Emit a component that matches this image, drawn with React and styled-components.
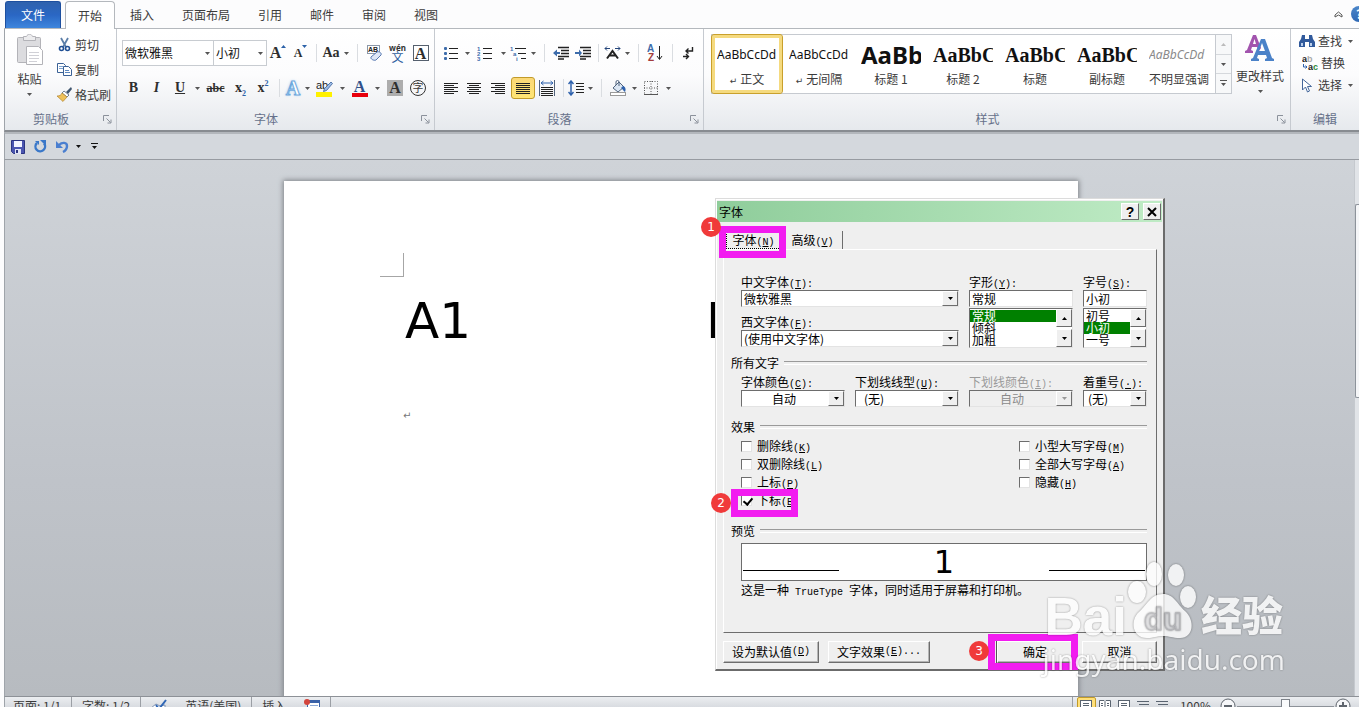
import { useState } from "react";
import styled, { createGlobalStyle } from "styled-components";

const GlobalStyle = createGlobalStyle`
  * {
    box-sizing: border-box;
    margin: 0;
    padding: 0;
  }
  body {
    background-color: #fcfcfd;
    font-family: "Noto Sans CJK SC", "Noto Sans", sans-serif;
    font-size: 12px;
    line-height: 16px;
    color: #3b3b3b;
    overflow: hidden;
  }
  button, input, select {
    font: inherit;
    color: inherit;
    border: none;
    border-radius: 0;
    background: none;
    outline: none;
  }
  svg {
    display: block;
    flex: none;
  }
`;

const Window = styled.div`
  position: relative;
  height: 100vh;
  padding-left: 4px;
  display: flex;
  flex-direction: column;
  overflow: hidden;
`;

/* 选项卡 */
const TabBar = styled.nav`
  display: flex;
  align-items: flex-end;
  height: 29px;
  padding-top: 1px;
  border-bottom: 1px solid #b4b8bd;
`;

const FileTab = styled.button`
  width: 56px;
  height: 27px;
  margin: 0 4px 0 1px;
  border: 1px solid #1d4f9f;
  border-bottom: none;
  border-radius: 3px 3px 0 0;
  background: linear-gradient(#2f62ad, #2a67c4 50%, #3f86dd);
  color: #fff;
`;

const Tab = styled.button`
  height: 28px;
  padding: 0 ${(props) => (props.$active ? 12 : 13)}px;
  margin-right: ${(props) => (props.$active ? 1 : 0)}px;
  margin-bottom: ${(props) => (props.$active ? -1 : 0)}px;
  border: 1px solid ${(props) => (props.$active ? "#b4b8bd" : "transparent")};
  border-bottom: none;
  border-radius: 4px 4px 0 0;
  background-color: ${(props) => (props.$active ? "#fff" : "transparent")};
`;

const TabTools = styled.div`
  display: flex;
  align-items: center;
  gap: 8px;
  height: 28px;
  margin-left: auto;
  margin-right: -8px;
`;

const Help = styled.button`
  width: 16px;
  height: 16px;
  border-radius: 50%;
  background: linear-gradient(#4c86c9, #2e68b4);
  color: #fff;
  font-weight: 700;
  line-height: 14px;
`;

/* 功能区 */
const Ribbon = styled.div`
  display: flex;
  height: 103px;
  border-left: 1px solid #9fa4aa;
  border-bottom: 2px solid #888c91;
  background: linear-gradient(#fff, #fcfcfd 45%, #e6e9ed);
`;

const Group = styled.section`
  flex: ${(props) => (props.$w ? `0 0 ${props.$w}px` : "1 1 0")};
  display: flex;
  flex-direction: column;
  border-right: 1px solid #c6cad0;
  &:last-child {
    border-right: none;
  }
`;

const GroupBody = styled.div`
  flex: 1;
  display: flex;
  padding-left: ${(props) => props.$pad || 0}px;
`;

const Caption = styled.div`
  display: flex;
  align-items: center;
  height: 22px;
  color: #66718a;
  span {
    flex: 1;
    text-align: center;
  }
  span:not(:last-child) {
    padding-right: 6px;
  }
  svg {
    margin-right: 4px;
  }
`;

const Rows = styled.div`
  display: flex;
  flex-direction: column;
  gap: 9px;
  padding-top: 11px;
`;

const Row = styled.div`
  display: flex;
  align-items: center;
  height: 26px;
`;

const IconBtn = styled.button`
  display: flex;
  align-items: center;
  justify-content: center;
  flex: none;
  width: ${(props) => props.$w || 23}px;
  height: 22px;
  border: 1px solid ${(props) => (props.$on ? "#c29b29" : "transparent")};
  border-radius: 3px;
  background: ${(props) =>
    props.$on ? "linear-gradient(#fbd877, #ffe574)" : "none"};
`;

/* 字号增减：箭头在字母右上角 */
const SizeBtn = styled(IconBtn)`
  svg {
    align-self: flex-start;
    margin-top: 2px;
  }
`;

const Sep = styled.span`
  width: ${(props) => props.$w || 12}px;
  height: 18px;
  display: flex;
  justify-content: center;
  &::after {
    content: "";
    width: 1px;
    background-color: #dadde1;
  }
`;

const Letter = styled.span`
  font-family: "Liberation Serif", serif;
  font-size: ${(props) => props.$size || 16}px;
  font-weight: 700;
  font-style: ${(props) => (props.$italic ? "italic" : "normal")};
  text-decoration: ${(props) => props.$line || "none"};
  line-height: 18px;
  color: ${(props) => props.$color || "#2e2e2e"};
  sub,
  sup {
    font-size: 8px;
    line-height: 8px;
    color: #2c62a8;
  }
`;

const BoxLetter = styled(Letter)`
  width: 16px;
  height: 16px;
  line-height: 15px;
  text-align: center;
  border: ${(props) => (props.$shade ? "none" : "1px solid #55606e")};
  background-color: ${(props) => (props.$shade ? "#adadad" : "#fff")};
`;

const Ring = styled.span`
  width: 16px;
  height: 16px;
  border: 1px solid #333;
  border-radius: 50%;
  font-size: 11px;
  line-height: 13px;
`;

const Underbar = styled.span`
  display: flex;
  flex-direction: column;
  align-items: center;
  width: 16px;
  border-bottom: 4px solid ${(props) => props.$bar};
  span {
    line-height: 13px;
  }
`;

const Glow = styled(Letter)`
  color: #fff;
  -webkit-text-stroke: 1px #6fa9dd;
  text-shadow: 0 0 3px #8fc2ee;
`;

const Pinyin = styled.span`
  display: flex;
  flex-direction: column;
  align-items: center;
  font-size: 12px;
  line-height: 11px;
  color: #2f5f9f;
  small {
    font-family: "Noto Sans", sans-serif;
    font-size: 8px;
    line-height: 7px;
    font-weight: 700;
    color: #333;
  }
`;

const Combo = styled.label`
  display: flex;
  align-items: center;
  width: ${(props) => props.$w}px;
  height: 26px;
  margin-right: -1px;
  padding: 0 3px 0 2px;
  border: 1px solid #c8ccd1;
  background-color: #fff;
  color: #111;
  input {
    flex: 1;
    min-width: 0;
  }
`;

const BigBtn = styled.button`
  display: flex;
  flex-direction: column;
  align-items: center;
  width: ${(props) => props.$w}px;
  padding-top: 5px;
  gap: 6px;
`;

const SmallList = styled.div`
  display: flex;
  flex-direction: column;
  padding-top: ${(props) => props.$top}px;
`;

const SmallBtn = styled.button`
  display: flex;
  align-items: center;
  height: ${(props) => props.$h}px;
  gap: 3px;
  svg:last-child {
    margin-left: 3px;
  }
`;

const Gallery = styled.div`
  display: flex;
  width: 521px;
  height: 60px;
  margin: 5px 0 0 7px;
  border: 1px solid #c6cad0;
  background-color: #fff;
`;

const StyleItem = styled.button`
  width: 72px;
  margin: -1px 0 -1px ${(props) => (props.$on ? -1 : 0)}px;
  display: flex;
  flex-direction: column;
  align-items: center;
  padding-top: 6px;
  border: ${(props) => (props.$on ? "1px solid #c9a02c" : "1px solid transparent")};
  border-radius: 3px;
  box-shadow: ${(props) => (props.$on ? "inset 0 0 0 3px #f5da7f" : "none")};
`;

const Sample = styled.span`
  width: 60px;
  height: 28px;
  overflow: hidden;
  white-space: nowrap;
  text-align: left;
  line-height: 28px;
  font-family: ${(props) =>
    props.$serif ? '"Liberation Serif", serif' : '"Noto Sans", sans-serif'};
  font-size: ${(props) => props.$size || 12}px;
  font-weight: ${(props) => (props.$size ? 700 : 400)};
  font-style: ${(props) => (props.$faint ? "italic" : "normal")};
  color: ${(props) => (props.$faint ? "#8a8a8a" : "#111")};
`;

const StyleName = styled.span`
  margin-top: 2px;
  white-space: nowrap;
  small {
    font-family: "DejaVu Sans", sans-serif;
    font-size: 9px;
    line-height: 9px;
  }
`;

const Scroller = styled.div`
  display: flex;
  flex-direction: column;
  flex: 1;
  border-left: 1px solid #c6cad0;
  background-color: #f7f8f9;
  button {
    flex: 1;
    display: flex;
    align-items: center;
    justify-content: center;
  }
  button + button {
    border-top: 1px solid #d5d8dc;
  }
`;

/* 快速访问工具栏 */
const QuickBar = styled.div`
  display: flex;
  align-items: center;
  height: 28px;
  padding-left: 2px;
  border-left: 1px solid #9fa4aa;
  border-top: 2px solid #b3b7bc;
  border-bottom: 1px solid #979ba1;
  background-color: #d4d8dd;
`;

/* 文档区 */
const Workspace = styled.main`
  flex: 1;
  min-height: 0;
  display: flex;
  border-left: 1px solid #9fa4aa;
  background: linear-gradient(#cfd3d8, #bfc3c9 60%, #b7bbc0);
`;

const Canvas = styled.div`
  flex: 1;
  display: flex;
  justify-content: center;
  padding-top: 21px;
  padding-left: 3px;
  overflow: hidden;
`;

const Paper = styled.article`
  flex: 0 0 794px;
  height: 1123px;
  padding: 72px 96px;
  background-color: #fff;
  box-shadow: 0 0 5px 1px #7f8388;
`;

const CropMark = styled.div`
  width: 24px;
  height: 24px;
  border-right: 1px solid #a6a6a6;
  border-bottom: 1px solid #a6a6a6;
`;

const Line = styled.p`
  display: flex;
  gap: 235px;
  margin: 14px 0 57px 25px;
  font-family: "DejaVu Sans", sans-serif;
  font-size: 50px;
  line-height: 60px;
  color: #000;
`;

const ParaMark = styled.p`
  margin-left: 23px;
  font-family: "DejaVu Sans", sans-serif;
  font-size: 10px;
  color: #777;
`;

const VScroll = styled.div`
  width: 5px;
  padding-top: 44px;
  background-color: #e1e4e8;
  border-left: 1px solid #c5c9ce;
`;

const VThumb = styled.div`
  height: 194px;
  border: 1px solid #8d939b;
  border-right: none;
  border-radius: 2px 0 0 2px;
  background-color: #f5f6f8;
`;

/* 状态栏 */
const StatusBar = styled.footer`
  flex: 0 0 11px;
  overflow: hidden;
  border-left: 1px solid #9fa4aa;
  border-top: 1px solid #8d9197;
  background-color: #d9dde2;
`;

const StatusInner = styled.div`
  display: flex;
  align-items: center;
  height: 18px;
  padding-left: 8px;
  background: linear-gradient(#eceef1, #c9cdd3);
`;

const StatusItem = styled.span`
  display: flex;
  align-items: center;
  height: 18px;
  padding: 0 ${(props) => (props.$tight ? 8 : 10)}px 0
    ${(props) => (props.$first ? 0 : 10)}px;
  border-right: ${(props) => (props.$open ? "none" : "1px solid #9b9fa5")};
`;

const Views = styled.div`
  display: flex;
  align-items: center;
  margin-left: auto;
  padding-left: 4px;
  border-left: 1px solid #9b9fa5;
  > button {
    width: 19px;
    height: 18px;
    display: flex;
    align-items: center;
    justify-content: center;
    border-radius: 2px;
  }
  > button:first-child {
    background-color: #ffe07a;
    border: 1px solid #c29b29;
  }
`;

const Zoom = styled.div`
  display: flex;
  align-items: center;
  margin-left: 8px;
  padding-right: 8px;
  gap: 1px;
  label {
    margin-right: 8px;
  }
`;

const ZoomRange = styled.input`
  width: 97px;
  height: 16px;
  appearance: none;
  background: linear-gradient(#8d9299, #8d9299) center / 100% 1px no-repeat;
  &::-webkit-slider-thumb {
    appearance: none;
    width: 9px;
    height: 14px;
    border: 1px solid #7d8289;
    background-color: #fafbfc;
  }
`;

/* 字体对话框 */
const Dialog = styled.form`
  position: absolute;
  left: 715px;
  top: 198px;
  width: 450px;
  padding: 2px 1px 6px;
  border: 1px solid #dcdcdc;
  border-right: 2px solid #6b6b6b;
  border-bottom: 2px solid #6b6b6b;
  box-shadow: inset 1px 1px 0 #fff;
  background-color: #efefef;
  color: #000;
`;

const TitleBar = styled.header`
  display: flex;
  align-items: center;
  gap: 4px;
  height: 21px;
  padding: 0 1px 0 2px;
  background: linear-gradient(90deg, #8fcd9b, #bfebc5);
  h2 {
    flex: 1;
    font-size: 12px;
    font-weight: 400;
  }
`;

const Raised = styled.button`
  display: flex;
  align-items: center;
  justify-content: center;
  border: 1px solid;
  border-color: #fff #6d6d6d #6d6d6d #fff;
  background-color: #efefef;
`;

const CaptionBtn = styled(Raised)`
  width: 18px;
  height: 17px;
  font-family: "Liberation Sans", sans-serif;
  font-size: 14px;
  font-weight: 700;
`;

const DialogBody = styled.div`
  padding: 9px 5px 0 6px;
`;

const DialogTabs = styled.div`
  display: flex;
  height: 18px;
`;

const DialogTab = styled.button`
  width: 60px;
  height: 18px;
  white-space: nowrap;
  line-height: 18px;
  border-right: ${(props) => (props.$on ? "none" : "1px solid #6d6d6d")};
`;

const TabFocus = styled.span`
  display: block;
  width: 53px;
  height: 16px;
  margin-left: 4px;
  line-height: 16px;
  outline: 1px dotted #000;
`;

const Key = styled.span`
  font-family: "Liberation Mono", monospace;
  font-size: 10px;
  line-height: 1;
`;

const Panel = styled.div`
  padding: 23px 9px 34px 7px;
  border: 1px solid;
  border-color: #fff #6d6d6d #6d6d6d #fff;
`;

const SectionTitle = styled.h3`
  display: flex;
  align-items: center;
  gap: 5px;
  height: 16px;
  margin-top: ${(props) => props.$top}px;
  font-size: 12px;
  font-weight: 400;
  &::after {
    content: "";
    flex: 1;
    height: 2px;
    border-top: 1px solid #9a9a9a;
    border-bottom: 1px solid #fff;
  }
`;

const Fields = styled.div`
  display: grid;
  grid-template-columns: 104px 104px 104px 1fr;
  column-gap: 10px;
  padding: ${(props) => props.$top || 0}px 0 0 10px;
`;

const FieldStack = styled.div`
  grid-column: span ${(props) => props.$span || 1};
  display: flex;
  flex-direction: column;
  gap: 6px;
  min-width: 0;
`;

const FieldLabel = styled.label`
  display: block;
  height: 17px;
  white-space: nowrap;
  line-height: 17px;
  color: ${(props) => (props.$off ? "#9a9a9a" : "#000")};
`;

const Sunken = styled.div`
  display: flex;
  height: 17px;
  border: 1px solid;
  border-color: #6d6d6d #e3e3e3 #e3e3e3 #6d6d6d;
  background-color: ${(props) => (props.$off ? "#efefef" : "#fff")};
  color: ${(props) => (props.$off ? "#8a8a8a" : "#000")};
  select,
  input {
    flex: 1;
    min-width: 0;
    width: 100%;
    height: 15px;
    line-height: 15px;
    appearance: none;
    opacity: 1;
    padding-left: ${(props) => props.$indent || 2}px;
  }
`;

const ArrowBox = styled(Raised).attrs({ as: "span" })`
  width: 16px;
  height: 15px;
`;

const ListFrame = styled.div`
  display: flex;
  height: 40px;
  margin-top: 1px;
  border: 1px solid;
  border-color: #6d6d6d #e3e3e3 #e3e3e3 #6d6d6d;
  background-color: #fff;
`;

const ListBox = styled.ul`
  flex: 1;
  list-style: none;
  padding-top: 1px;
  overflow: hidden;
`;

const ListItem = styled.li`
  height: 12px;
  line-height: 12px;
  padding-left: 2px;
  background-color: ${(props) => (props.$on ? "#008000" : "transparent")};
  color: ${(props) => (props.$on ? "#fff" : "#000")};
`;

const ListScroll = styled.div`
  display: flex;
  flex-direction: column;
  justify-content: space-between;
  button {
    width: 16px;
    height: 18px;
  }
`;

const Effects = styled.div`
  display: grid;
  grid-template-columns: 278px 1fr;
  padding: 2px 0 0 10px;
`;

const Check = styled.label`
  display: flex;
  align-items: center;
  gap: 5px;
  height: 18px;
  white-space: nowrap;
`;

const Tick = styled.input`
  position: relative;
  appearance: none;
  width: 11px;
  height: 11px;
  border: 1px solid;
  border-color: #6d6d6d #e3e3e3 #e3e3e3 #6d6d6d;
  background-color: #fff;
  &:checked::after {
    content: "";
    position: absolute;
    left: 3px;
    top: 0;
    width: 4px;
    height: 7px;
    border: solid #000;
    border-width: 0 2px 2px 0;
    transform: rotate(40deg);
  }
`;

const Preview = styled.div`
  display: flex;
  align-items: center;
  justify-content: space-between;
  height: 38px;
  margin: 4px 0 1px 10px;
  padding: 0 1px;
  border: 1px solid #6d6d6d;
  background-color: #fff;
  font-family: "DejaVu Sans", sans-serif;
  font-size: 32px;
  line-height: 36px;
  &::before,
  &::after {
    content: "";
    align-self: flex-end;
    width: 96px;
    height: 1px;
    margin-bottom: 9px;
    background-color: #000;
  }
`;

const Note = styled.p`
  height: 16px;
  padding-left: 10px;
`;

const Actions = styled.div`
  display: flex;
  gap: 9px;
  margin-top: 8px;
`;

const PushBtn = styled(Raised)`
  width: ${(props) => props.$w}px;
  height: 22px;
  margin-left: ${(props) => (props.$end ? "auto" : 0)};
  box-shadow: inset -1px -1px 0 #b5b5b5;
  outline: ${(props) => (props.$end ? "1px solid #555" : "none")};
`;

/* 标注 */
const Mark = styled.div`
  position: absolute;
  left: ${(props) => props.$x}px;
  top: ${(props) => props.$y}px;
  width: ${(props) => props.$w}px;
  height: ${(props) => props.$h}px;
  border: 7px solid #f21cf0;
  pointer-events: none;
`;

const Step = styled.span`
  position: absolute;
  left: ${(props) => props.$x}px;
  top: ${(props) => props.$y}px;
  width: 20px;
  height: 20px;
  border-radius: 50%;
  background-color: #f03a3a;
  color: #fff;
  font-family: "DejaVu Sans", sans-serif;
  font-size: 12px;
  line-height: 20px;
  text-align: center;
`;

const Watermark = styled.div`
  position: absolute;
  right: 74px;
  bottom: 32px;
  opacity: 0.8;
  color: #fff;
  pointer-events: none;
  text-shadow: 0 0 2px rgba(0, 0, 0, 0.5);
`;

const Brand = styled.div`
  display: flex;
  align-items: flex-end;
  padding-left: 2px;
  font-family: "Liberation Sans", "Noto Sans CJK SC", sans-serif;
  font-size: 53px;
  font-weight: 700;
  line-height: 52px;
  svg {
    margin-bottom: 5px;
    filter: drop-shadow(0 0 1px rgba(0, 0, 0, 0.5));
  }
  strong {
    margin-left: 4px;
    font-size: 41px;
    line-height: 52px;
  }
`;

const Site = styled.div`
  font-family: "Noto Sans", sans-serif;
  font-size: 28px;
  line-height: 32px;
`;

const Caret = ({ up, color = "#555", size = 5 }) => (
  <svg width={size} height="3" viewBox="0 0 5 3">
    <path d={up ? "M0 3h5L2.5 0z" : "M0 0h5L2.5 3z"} fill={color} />
  </svg>
);

const Drop = () => (
  <IconBtn $w={10} aria-label="更多">
    <Caret />
  </IconBtn>
);

const Launcher = () => (
  <svg width="9" height="9" viewBox="0 0 9 9" fill="none" stroke="#8b919b">
    <path d="M.5 6V.5H6M3.5 3.5l4 4M8 4.5V8H4.5" />
  </svg>
);

const Bars = ({ rows, width = 15, color = "#222" }) => (
  <svg width={width} height="13" viewBox={`0 0 ${width} 13`}>
    {rows.map(([x, w], i) => (
      <rect key={i} x={x} y={i * 2 + 1} width={w} height="1" fill={color} />
    ))}
  </svg>
);

const alignLeft = [[0, 14], [0, 10], [0, 14], [0, 10], [0, 14], [0, 10]];
const alignCenter = [[0, 14], [2, 10], [0, 14], [2, 10], [0, 14], [2, 10]];
const alignRight = [[0, 14], [4, 10], [0, 14], [4, 10], [0, 14], [4, 10]];
const justify = [[0, 14], [0, 14], [0, 14], [0, 14], [0, 14], [0, 14]];

const ListIcon = ({ kind }) => (
  <svg width="16" height="16" viewBox="0 0 16 16">
    {[2, 7, 12].map((y, i) => (
      <g key={y}>
        {kind === "bullet" && (
          <rect x="1" y={y} width="3" height="3" rx="1" fill="#3d6cab" />
        )}
        {kind !== "bullet" && (
          <text
            x={kind === "multi" ? i * 3 : 0}
            y={y + 4}
            fontSize="6"
            fontFamily="Liberation Sans, sans-serif"
            fontWeight="700"
            fill="#3d6cab"
          >
            {kind === "multi" ? ["1", "a", "i"][i] : i + 1}
          </text>
        )}
        <rect
          x={kind === "multi" ? 5 + i * 3 : 6}
          y={y + 1}
          width={kind === "multi" ? 11 - i * 3 : 9}
          height="1"
          fill="#222"
        />
      </g>
    ))}
  </svg>
);

const Indent = ({ flip }) => (
  <svg width="16" height="14" viewBox="0 0 16 14">
    <path
      d="M5 1.5h11M8 4.5h8M8 7.5h8M5 10.5h11M5 13h6"
      stroke="#222"
      strokeWidth="1.4"
    />
    <path
      d={flip ? "M0 6h4V3.500l3 3.500-3 3.500V8H0z" : "M7 6H4V3.500L0 7l4 3.500V8h3z"}
      fill="#3d6cab"
    />
  </svg>
);

const AsianLayout = () => (
  <svg width="17" height="14" viewBox="0 0 17 14" fill="none" stroke="#222">
    <path d="M3 12.500L8.500 5l5.500 7.500M5 9.500h7" strokeWidth="2" />
    <path d="M1 2.500h5M11 2.500h5M3 .5l-2 2 2 2M14 .5l2 2-2 2" stroke="#24457a" />
  </svg>
);

const SortIcon = () => (
  <svg width="16" height="18" viewBox="0 0 16 18">
    <g fontFamily="Liberation Sans, sans-serif" fontWeight="700" fontSize="10">
      <text x="0" y="8" fill="#3d6cab">A</text>
      <text x="1" y="17" fill="#a33c3c">Z</text>
    </g>
    <path d="M12.500 2v13M10 12l2.500 3.500L15 12" stroke="#222" fill="none" />
  </svg>
);

const MarksIcon = () => (
  <svg width="12" height="14" viewBox="0 0 12 14" stroke="#222" fill="none">
    <path d="M10.500 1v4H4M6.500 2.500L4 5l2.500 2.500M1 10.500h5M4 8l2.500 2.500L4 13" strokeWidth="1.400" />
  </svg>
);

const Distribute = () => (
  <svg width="16" height="16" viewBox="0 0 16 16" fill="none">
    <path d="M.5 0v16M15.500 0v16" stroke="#54657c" />
    <path d="M2 3h12M4.500 1L2 3l2.500 2M11.500 1L14 3l-2.500 2" stroke="#2f62ad" />
    <path d="M2 7.500h12M2 9.500h12M2 11.500h12M2 13.500h12M2 15.500h12" stroke="#222" />
  </svg>
);

const Spacing = () => (
  <svg width="16" height="16" viewBox="0 0 16 16" fill="none">
    <path d="M3 1v14M.5 4L3 1l2.500 3M.5 12L3 15l2.500-3" stroke="#2f62ad" strokeWidth="1.500" />
    <path d="M8 3.500h8M8 6.500h8M8 9.500h8M8 12.500h8" stroke="#222" />
  </svg>
);

const Bucket = () => (
  <svg width="17" height="16" viewBox="0 0 17 16">
    <path d="M3 8l6-6 5 5-6 5z" fill="#dbe6f3" stroke="#51647e" />
    <path d="M6 5V2a1.500 1.500 0 013 0v4" fill="none" stroke="#51647e" />
    <path d="M13 6c3 1 3 4 2 6-2-1-2-3-4-4z" fill="#2f62ad" />
    <rect x=".5" y="12.500" width="15" height="3" fill="#fff" stroke="#9a9a9a" />
  </svg>
);

const BorderIcon = () => (
  <svg width="14" height="14" viewBox="0 0 14 14" fill="none" stroke="#555">
    <path d="M.5.5h13v13H.5zM7 0v14M0 7h14" strokeDasharray="1 1.500" />
    <path d="M0 13.500h14" />
  </svg>
);

const PasteIcon = () => (
  <svg width="28" height="31" viewBox="0 0 28 31" stroke="#b3b3b8">
    <rect x="1.500" y="3.500" width="23" height="25" rx="1" fill="#dcdcdf" />
    <path d="M7.500 6.500v-4h3c1-3 5-3 6 0h3v4z" fill="#ececee" />
    <path d="M10.500 12.500h12l4 4v14h-16z" fill="#fff" />
    <path d="M13 18.500h10M13 21.500h10M13 24.500h10M13 27.500h8" stroke="#d0d0d6" />
  </svg>
);

const CutIcon = () => (
  <svg width="15" height="15" viewBox="0 0 15 15" fill="none">
    <path d="M4 1l5 9M11 1L6 10" stroke="#5b7ea8" strokeWidth="1.800" />
    <circle cx="4.500" cy="11.500" r="2" stroke="#1f4f94" strokeWidth="1.600" />
    <circle cx="10.500" cy="11.500" r="2" stroke="#1f4f94" strokeWidth="1.600" />
  </svg>
);

const CopyIcon = () => (
  <svg width="15" height="15" viewBox="0 0 15 15" fill="#fff" stroke="#3a6196">
    <path d="M.5 1.500h6l2 2v7h-8z" />
    <path d="M2 4.500h4M2 6.500h4" stroke="#7fa3d0" />
    <path d="M6.500 4.500h5l3 3v6h-8z" />
    <path d="M8 8.500h4M8 10.500h5" stroke="#5b86bf" />
  </svg>
);

const BrushIcon = () => (
  <svg width="15" height="15" viewBox="0 0 15 15">
    <path d="M14 0l1 2-4 5-2-2z" fill="#40566f" />
    <path d="M7 4l5 4-2 2-5-4z" fill="#fff" stroke="#4f5f74" strokeWidth=".8" />
    <path d="M5 6l5 4-4 4.500L0 9c3 0 4-1 5-3z" fill="#efc15a" stroke="#a97a22" strokeWidth=".6" />
  </svg>
);

const ClearIcon = () => (
  <svg width="17" height="17" viewBox="0 0 17 17">
    <rect x="1.500" y=".5" width="12" height="8" fill="#fff" stroke="#8b97a8" />
    <text x="2" y="7" fontSize="7" fontWeight="700" fontFamily="Liberation Sans, sans-serif" fill="#222">
      AB
    </text>
    <path d="M5 12l6-5c2-1 5 1 4 3l-5 5c-2 1-6-1-5-3z" fill="#dfe7f6" stroke="#5577b0" />
  </svg>
);

const Highlighter = () => (
  <svg width="17" height="17" viewBox="0 0 17 17">
    <text x="0" y="9" fontSize="11" fontFamily="Liberation Sans, sans-serif" fill="#222">
      ab
    </text>
    <rect x="0" y="12" width="16" height="5" fill="#fff100" />
    <path d="M15 2l1.500 1.500-6 7-3 1 1-3z" fill="#9cbbe6" stroke="#385f9b" strokeWidth=".8" />
  </svg>
);

const StylesIcon = () => (
  <svg width="30" height="28" viewBox="0 0 30 28">
    <path d="M0 19v-2l2-1L8 1h3l5 13-2 3-2-4H7l-1 3 2 1v2zM8 10h3L9.500 5z" fill="#a254ae" />
    <path d="M6 27v-2l2-1 8-19h4l7 19 2 1v2h-9v-2l2-1-1-3h-8l-1 3 2 1v2zM14 17h6l-3-8z" fill="#4b82c8" />
  </svg>
);

const FindIcon = () => (
  <svg width="16" height="14" viewBox="0 0 16 14" fill="#315a9c">
    <path d="M3 1h3v4h4V1h3l1 4 2 3v5h-6V8H6v5H0V8l2-3z" />
    <path d="M2 9h2v3H2zM11 9h2v3h-2z" fill="#b9cdea" />
  </svg>
);

const ReplaceIcon = () => (
  <svg width="16" height="15" viewBox="0 0 16 15">
    <g fontFamily="Liberation Sans, sans-serif" fontWeight="700" fontSize="9">
      <text x="0" y="6" fill="#222">a</text>
      <text x="5" y="6" fill="#aaa">b</text>
      <text x="6" y="14" fill="#222">a</text>
      <text x="11" y="14" fill="#2d8a3e">c</text>
    </g>
    <path d="M1.500 8v3H5M3.500 9.500L5 11l-1.500 1.500" fill="none" stroke="#2f62ad" />
  </svg>
);

const PointerIcon = () => (
  <svg width="16" height="15" viewBox="0 0 16 15">
    <path d="M3.500 1v11l3-3 2 5 2-1-2-4.500h4z" fill="#fff" stroke="#44679b" />
  </svg>
);

const SaveIcon = () => (
  <svg width="14" height="14" viewBox="0 0 14 14">
    <path d="M.5.5h13v13h-11l-2-2z" fill="#4a55b0" stroke="#2b3582" />
    <rect x="3" y="1" width="8" height="6" fill="#f2f4ff" />
    <rect x="4" y="9" width="6" height="5" fill="#dfe3f5" />
    <rect x="5" y="10" width="2" height="3" fill="#2b3582" />
  </svg>
);

const RedoIcon = () => (
  <svg width="13" height="13" viewBox="0 0 13 13" fill="none">
    <path d="M3 3a4.800 4.800 0 107 .5" stroke="#3a78c9" strokeWidth="2.400" />
    <path d="M6 0h6v6z" fill="#3a78c9" />
    <path d="M1 1h4v4z" fill="#3a78c9" />
  </svg>
);

const UndoIcon = () => (
  <svg width="13" height="13" viewBox="0 0 13 13" fill="none">
    <path d="M3 5c3-3 8-3 8 1 0 3-2 5-4 6" stroke="#4a7fd0" strokeWidth="2.400" />
    <path d="M0 1v7h7z" fill="#4a7fd0" />
  </svg>
);

const ProofIcon = () => (
  <svg width="16" height="15" viewBox="0 0 16 15">
    <path d="M0 9l5-4 4 2 5-1v6l-6 2-5-1z" fill="#fff" stroke="#7f93b2" />
    <path d="M5 6l3 4 7-9" fill="none" stroke="#2f66b5" strokeWidth="2" />
  </svg>
);

const MacroIcon = () => (
  <svg width="16" height="14" viewBox="0 0 16 14">
    <rect x="3.500" y="1.500" width="12" height="12" fill="#fff" stroke="#3a62a8" />
    <path d="M4 3h11" stroke="#3a62a8" strokeWidth="2" />
    <path d="M6 6.500h8M6 9.500h8" stroke="#8ea9d6" />
    <circle cx="3" cy="3" r="3" fill="#d3453c" />
  </svg>
);

const PageIcon = () => (
  <svg width="12" height="12" viewBox="0 0 12 12" fill="#fff" stroke="#5a6470">
    <rect x=".5" y=".5" width="11" height="11" />
    <path d="M3 3.500h6M3 5.500h6M3 7.500h6" />
  </svg>
);

const BookIcon = () => (
  <svg width="12" height="12" viewBox="0 0 12 12" fill="#fff" stroke="#5a6470">
    <path d="M.5.5H5l1 1 1-1h4.500v10H7l-1 1-1-1H.5zM6 2v9M2 3.500h2M8 3.500h2M2 5.500h2M8 5.500h2" />
  </svg>
);

const LinesIcon = () => (
  <svg width="12" height="12" viewBox="0 0 12 12" stroke="#5a6470">
    <path d="M0 1.500h12M2 4.500h10M0 7.500h12M2 10.500h10" />
  </svg>
);

const RoundIcon = ({ plus }) => (
  <svg width="16" height="16" viewBox="0 0 16 16" stroke="#5f656d">
    <circle cx="8" cy="8" r="7" fill="#f6f7f9" />
    <path d={plus ? "M4 8h8M8 4v8" : "M4 8h8"} strokeWidth="2" />
  </svg>
);

const Paw = () => (
  <svg width="70" height="78" viewBox="0 0 70 78" fill="#fff">
    <ellipse cx="10" cy="32" rx="9" ry="11" />
    <ellipse cx="27" cy="14" rx="8" ry="12" />
    <ellipse cx="49" cy="15" rx="8" ry="11" />
    <ellipse cx="61" cy="37" rx="8" ry="11" />
    <path d="M36 34c11 0 14 10 22 17 10 9 9 27-5 27-8 0-10-2-17-2s-9 2-16 2C5 78 3 60 12 52c8-7 12-18 24-18z" />
    <text
      x="17"
      y="70"
      fontSize="31"
      fontWeight="700"
      fontFamily="Liberation Sans, sans-serif"
      fill="#e6e6e8"
      stroke="#b4b4b8"
    >
      du
    </text>
  </svg>
);

const tabs = ["插入", "页面布局", "引用", "邮件", "审阅", "视图"];

const gallery = [
  { name: "正文", mark: true, text: "AaBbCcDd", on: true },
  { name: "无间隔", mark: true, text: "AaBbCcDd" },
  { name: "标题 1", text: "AaBb", size: 24 },
  { name: "标题 2", text: "AaBbC", size: 20, serif: true },
  { name: "标题", text: "AaBbC", size: 20, serif: true },
  { name: "副标题", text: "AaBbC", size: 20, serif: true },
  { name: "不明显强调", text: "AaBbCcDd", faint: true },
];

const effects = [
  ["删除线", "K"],
  ["小型大写字母", "M"],
  ["双删除线", "L"],
  ["全部大写字母", "A"],
  ["上标", "P"],
  ["隐藏", "H"],
  ["下标", "B"],
];

const Hot = ({ k, end = "" }) => (
  <Key>
    (<u>{k}</u>){end}
  </Key>
);

const SelectField = ({ id, label, k, value, off, indent }) => (
  <div>
    <FieldLabel htmlFor={id} $off={off}>
      {label}
      <Hot k={k} end=":" />
    </FieldLabel>
    <Sunken $off={off} $indent={indent}>
      <select id={id} disabled={off}>
        <option>{value}</option>
      </select>
      <ArrowBox aria-hidden="true">
        <Caret color={off ? "#999" : "#000"} />
      </ArrowBox>
    </Sunken>
  </div>
);

const ListField = ({ id, label, k, items, picked }) => {
  const [value, setValue] = useState(picked);
  return (
    <div>
      <FieldLabel htmlFor={id}>
        {label}
        <Hot k={k} end=":" />
      </FieldLabel>
      <Sunken>
        <input
          id={id}
          value={value}
          onChange={(e) => setValue(e.target.value)}
        />
      </Sunken>
      <ListFrame>
        <ListBox role="listbox" aria-label={label}>
          {items.map((item) => (
            <ListItem
              key={item}
              role="option"
              aria-selected={item === value}
              $on={item === value}
              onClick={() => setValue(item)}
            >
              {item}
            </ListItem>
          ))}
        </ListBox>
        <ListScroll>
          <Raised type="button" aria-label="向上">
            <Caret up color="#000" size={7} />
          </Raised>
          <Raised type="button" aria-label="向下">
            <Caret color="#000" size={7} />
          </Raised>
        </ListScroll>
      </ListFrame>
    </div>
  );
};

const FontDialog = () => {
  const [checked, setChecked] = useState({ B: true });

  const toggle = (key) => {
    setChecked((prev) => ({ ...prev, [key]: !prev[key] }));
  };

  return (
    <Dialog onSubmit={(e) => e.preventDefault()}>
      <TitleBar>
        <h2>字体</h2>
        <CaptionBtn type="button">?</CaptionBtn>
        <CaptionBtn type="button" aria-label="关闭">
          <svg width="10" height="10" viewBox="0 0 10 10" stroke="#000" strokeWidth="2">
            <path d="M1 1l8 8M9 1L1 9" />
          </svg>
        </CaptionBtn>
      </TitleBar>

      <DialogBody>
        <DialogTabs>
          <DialogTab type="button" $on>
            <TabFocus>
              字体
              <Hot k="N" />
            </TabFocus>
          </DialogTab>
          <DialogTab type="button">
            高级
            <Hot k="V" />
          </DialogTab>
        </DialogTabs>

        <Panel>
          <Fields>
            <FieldStack $span={2}>
              <SelectField id="cn" label="中文字体" k="T" value="微软雅黑" />
              <SelectField id="en" label="西文字体" k="F" value="(使用中文字体)" />
            </FieldStack>
            <ListField
              id="face"
              label="字形"
              k="Y"
              items={["常规", "倾斜", "加粗"]}
              picked="常规"
            />
            <ListField
              id="size"
              label="字号"
              k="S"
              items={["初号", "小初", "一号"]}
              picked="小初"
            />
          </Fields>

          <SectionTitle $top={7}>所有文字</SectionTitle>
          <Fields $top={2}>
            <SelectField id="color" label="字体颜色" k="C" value="自动" indent={30} />
            <SelectField id="line" label="下划线线型" k="U" value="(无)" indent={8} />
            <SelectField
              id="lineColor"
              label="下划线颜色"
              k="I"
              value="自动"
              indent={30}
              off
            />
            <SelectField id="dot" label="着重号" k="·" value="(无)" indent={4} />
          </Fields>

          <SectionTitle $top={12}>效果</SectionTitle>
          <Effects>
            {effects.map(([name, key]) => (
              <Check key={key}>
                <Tick
                  type="checkbox"
                  checked={!!checked[key]}
                  onChange={() => toggle(key)}
                />
                <span>
                  {name}
                  <Hot k={key} />
                </span>
              </Check>
            ))}
          </Effects>

          <SectionTitle $top={14}>预览</SectionTitle>
          <Preview>1</Preview>
          <Note>
            这是一种<Key> TrueType </Key>字体，同时适用于屏幕和打印机。
          </Note>
        </Panel>

        <Actions>
          <PushBtn type="button" $w={96}>
            设为默认值
            <Hot k="D" />
          </PushBtn>
          <PushBtn type="button" $w={102}>
            文字效果
            <Hot k="E" end="..." />
          </PushBtn>
          <PushBtn $w={76} $end>
            确定
          </PushBtn>
          <PushBtn type="button" $w={75}>
            取消
          </PushBtn>
        </Actions>
      </DialogBody>
    </Dialog>
  );
};

const App = () => {
  return (
    <Window>
      <GlobalStyle />

      <TabBar>
        <FileTab>文件</FileTab>
        <Tab $active>开始</Tab>
        {tabs.map((tab) => (
          <Tab key={tab}>{tab}</Tab>
        ))}
        <TabTools>
          <svg width="9" height="7" viewBox="0 0 9 7" fill="#fff" stroke="#555">
            <path d="M4.500 1L8 4v2L4.500 4 1 6V4z" />
          </svg>
          <Help>?</Help>
        </TabTools>
      </TabBar>

      <Ribbon>
        {/* 剪贴板 */}
        <Group $w={112}>
          <GroupBody>
            <BigBtn $w={49}>
              <PasteIcon />
              <span>粘贴</span>
              <Caret />
            </BigBtn>
            <SmallList $top={3}>
              <SmallBtn $h={25}>
                <CutIcon />
                剪切
              </SmallBtn>
              <SmallBtn $h={25}>
                <CopyIcon />
                复制
              </SmallBtn>
              <SmallBtn $h={25}>
                <BrushIcon />
                格式刷
              </SmallBtn>
            </SmallList>
          </GroupBody>
          <Caption>
            <span>剪贴板</span>
            <Launcher />
          </Caption>
        </Group>

        {/* 字体 */}
        <Group $w={318}>
          <GroupBody $pad={5}>
            <Rows>
              <Row>
                <Combo $w={92}>
                  <input defaultValue="微软雅黑" aria-label="字体" />
                  <Caret />
                </Combo>
                <Combo $w={54}>
                  <input defaultValue="小初" aria-label="字号" />
                  <Caret />
                </Combo>
                <SizeBtn $w={24}>
                  <Letter>A</Letter>
                  <Caret up color="#2c62a8" />
                </SizeBtn>
                <SizeBtn $w={21}>
                  <Letter $size={12}>A</Letter>
                  <Caret color="#2c62a8" />
                </SizeBtn>
                <Sep $w={10} />
                <IconBtn $w={20}>
                  <Letter $size={14}>Aa</Letter>
                </IconBtn>
                <Drop />
                <Sep />
                <IconBtn aria-label="清除格式">
                  <ClearIcon />
                </IconBtn>
                <IconBtn>
                  <Pinyin>
                    <small>wén</small>文
                  </Pinyin>
                </IconBtn>
                <IconBtn>
                  <BoxLetter>A</BoxLetter>
                </IconBtn>
              </Row>
              <Row>
                <IconBtn>
                  <Letter $size={14}>B</Letter>
                </IconBtn>
                <IconBtn>
                  <Letter $size={14} $italic>I</Letter>
                </IconBtn>
                <IconBtn $w={24}>
                  <Letter $size={14} $line="underline">U</Letter>
                </IconBtn>
                <Drop />
                <IconBtn $w={27}>
                  <Letter $size={12} $line="line-through">abc</Letter>
                </IconBtn>
                <IconBtn>
                  <Letter $size={14}>x<sub>2</sub></Letter>
                </IconBtn>
                <IconBtn $w={22}>
                  <Letter $size={14}>x<sup>2</sup></Letter>
                </IconBtn>
                <Sep $w={10} />
                <IconBtn $w={18}>
                  <Glow $size={20}>A</Glow>
                </IconBtn>
                <Drop />
                <IconBtn $w={25} aria-label="突出显示">
                  <Highlighter />
                </IconBtn>
                <Drop />
                <IconBtn $w={25}>
                  <Underbar $bar="#e8000d">
                    <Letter $color="#2f5089">A</Letter>
                  </Underbar>
                </IconBtn>
                <Drop />
                <IconBtn $w={26}>
                  <BoxLetter $shade>A</BoxLetter>
                </IconBtn>
                <IconBtn $w={20}>
                  <Ring>字</Ring>
                </IconBtn>
              </Row>
            </Rows>
          </GroupBody>
          <Caption>
            <span>字体</span>
            <Launcher />
          </Caption>
        </Group>

        {/* 段落 */}
        <Group $w={269}>
          <GroupBody $pad={5}>
            <Rows>
              <Row>
                <IconBtn $w={22} aria-label="项目符号">
                  <ListIcon kind="bullet" />
                </IconBtn>
                <Drop />
                <IconBtn $w={26} aria-label="编号">
                  <ListIcon kind="number" />
                </IconBtn>
                <Drop />
                <IconBtn $w={20} aria-label="多级列表">
                  <ListIcon kind="multi" />
                </IconBtn>
                <Drop />
                <Sep />
                <IconBtn $w={22} aria-label="减少缩进量">
                  <Indent />
                </IconBtn>
                <IconBtn $w={22} aria-label="增加缩进量">
                  <Indent flip />
                </IconBtn>
                <Sep $w={8} />
                <IconBtn $w={20} aria-label="中文版式">
                  <AsianLayout />
                </IconBtn>
                <Drop />
                <Sep />
                <IconBtn $w={22} aria-label="排序">
                  <SortIcon />
                </IconBtn>
                <Sep />
                <IconBtn $w={20} aria-label="编辑标记">
                  <MarksIcon />
                </IconBtn>
              </Row>
              <Row>
                <IconBtn aria-label="左对齐">
                  <Bars rows={alignLeft} />
                </IconBtn>
                <IconBtn aria-label="居中">
                  <Bars rows={alignCenter} />
                </IconBtn>
                <IconBtn $w={25} aria-label="右对齐">
                  <Bars rows={alignRight} />
                </IconBtn>
                <IconBtn $w={24} $on aria-label="两端对齐">
                  <Bars rows={justify} />
                </IconBtn>
                <IconBtn $w={24} aria-label="分散对齐">
                  <Distribute />
                </IconBtn>
                <Sep $w={8} />
                <IconBtn $w={18} aria-label="行距">
                  <Spacing />
                </IconBtn>
                <Drop />
                <Sep />
                <IconBtn $w={22} aria-label="底纹">
                  <Bucket />
                </IconBtn>
                <Drop />
                <IconBtn $w={24} aria-label="边框">
                  <BorderIcon />
                </IconBtn>
                <Drop />
              </Row>
            </Rows>
          </GroupBody>
          <Caption>
            <span>段落</span>
            <Launcher />
          </Caption>
        </Group>

        {/* 样式 */}
        <Group>
          <GroupBody>
            <Gallery>
              {gallery.map((item) => (
                <StyleItem key={item.name} $on={item.on}>
                  <Sample $size={item.size} $serif={item.serif} $faint={item.faint}>
                    {item.text}
                  </Sample>
                  <StyleName>
                    {item.mark && <small>↵ </small>}
                    {item.name}
                  </StyleName>
                </StyleItem>
              ))}
              <Scroller>
                <button aria-label="上一行">
                  <Caret up color="#bbb" />
                </button>
                <button aria-label="下一行">
                  <Caret />
                </button>
                <button aria-label="其他">
                  <svg width="7" height="7" viewBox="0 0 7 7" fill="#555">
                    <path d="M0 0h7v1H0zM1 3h5L3.500 6z" />
                  </svg>
                </button>
              </Scroller>
            </Gallery>
            <BigBtn $w={56}>
              <StylesIcon />
              <span>更改样式</span>
              <Caret />
            </BigBtn>
          </GroupBody>
          <Caption>
            <span>样式</span>
            <Launcher />
          </Caption>
        </Group>

        {/* 编辑 */}
        <Group $w={68}>
          <GroupBody $pad={8}>
            <SmallList $top={1}>
              <SmallBtn $h={22}>
                <FindIcon />
                查找
                <Caret />
              </SmallBtn>
              <SmallBtn $h={22}>
                <ReplaceIcon />
                替换
              </SmallBtn>
              <SmallBtn $h={22}>
                <PointerIcon />
                选择
                <Caret />
              </SmallBtn>
            </SmallList>
          </GroupBody>
          <Caption>
            <span>编辑</span>
          </Caption>
        </Group>
      </Ribbon>

      <QuickBar>
        <IconBtn $w={22} aria-label="保存">
          <SaveIcon />
        </IconBtn>
        <IconBtn $w={22} aria-label="重复">
          <RedoIcon />
        </IconBtn>
        <IconBtn $w={22} aria-label="撤消">
          <UndoIcon />
        </IconBtn>
        <IconBtn $w={10} aria-label="撤消列表">
          <Caret color="#111" />
        </IconBtn>
        <IconBtn aria-label="自定义">
          <svg width="7" height="7" viewBox="0 0 7 7" fill="#111">
            <path d="M0 0h7v1H0zM1 3h5L3.500 6z" />
          </svg>
        </IconBtn>
      </QuickBar>

      <Workspace>
        <Canvas>
          <Paper>
            <CropMark />
            <Line>
              <span>A1</span>
              <span>B</span>
            </Line>
            <ParaMark>↵</ParaMark>
          </Paper>
        </Canvas>
        <VScroll>
          <VThumb />
        </VScroll>
      </Workspace>

      <StatusBar>
        <StatusInner>
          <StatusItem $first>页面: 1/1</StatusItem>
          <StatusItem>字数: 1/2</StatusItem>
          <StatusItem $open $tight>
            <ProofIcon />
          </StatusItem>
          <StatusItem>英语(美国)</StatusItem>
          <StatusItem $open $tight>
            插入
          </StatusItem>
          <StatusItem>
            <MacroIcon />
          </StatusItem>
          <Views>
            <button aria-label="页面视图">
              <PageIcon />
            </button>
            <button aria-label="阅读版式">
              <BookIcon />
            </button>
            <button aria-label="Web 版式">
              <PageIcon />
            </button>
            <button aria-label="大纲">
              <LinesIcon />
            </button>
            <button aria-label="草稿">
              <LinesIcon />
            </button>
          </Views>
          <Zoom>
            <label htmlFor="zoom">100%</label>
            <button aria-label="缩小">
              <RoundIcon />
            </button>
            <ZoomRange id="zoom" type="range" defaultValue="50" />
            <button aria-label="放大">
              <RoundIcon plus />
            </button>
          </Zoom>
        </StatusInner>
      </StatusBar>

      <FontDialog />

      <Mark $x={719} $y={226} $w={67} $h={32} />
      <Mark $x={731} $y={489} $w={67} $h={28} />
      <Mark $x={988} $y={634} $w={90} $h={36} />
      <Step $x={701} $y={217}>1</Step>
      <Step $x={711} $y={493}>2</Step>
      <Step $x={969} $y={641}>3</Step>

      <Watermark>
        <Brand>
          Bai
          <Paw />
          <strong>经验</strong>
        </Brand>
        <Site>jingyan.baidu.com</Site>
      </Watermark>
    </Window>
  );
};

export default App;
